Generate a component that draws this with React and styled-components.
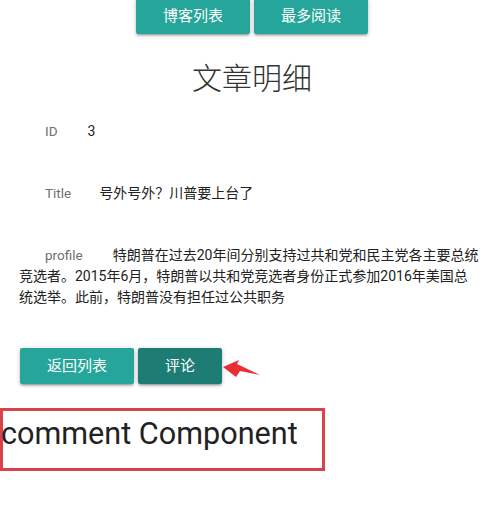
import React from "react";
import styled, { createGlobalStyle } from "styled-components";

const GlobalStyle = createGlobalStyle`
  html, body { margin: 0; padding: 0; background: #fff; }
  body {
    font-family: Roboto, "Noto Sans CJK SC", sans-serif;
    color: #222;
    overflow: hidden;
  }
  * { box-sizing: border-box; }
`;

const Page = styled.div`
  width: 503px;
  height: 508px;
  position: relative;
  overflow: hidden;
`;

const NavBar = styled.nav`
  display: flex;
  justify-content: center;
  gap: 4px;
  margin-top: -2px;
  padding-left: 1px;
`;

const Button = styled.button`
  height: 36px;
  padding: 0 27px;
  border: none;
  border-radius: 2px;
  background: ${(p) => (p.$active ? "#1d7d74" : "#26a69a")};
  color: #fff;
  font-family: Roboto, "Noto Sans CJK SC", sans-serif;
  font-size: 15px;
  line-height: 36px;
  cursor: pointer;
  box-shadow: 0 2px 2px 0 rgba(0, 0, 0, 0.14), 0 3px 1px -2px rgba(0, 0, 0, 0.12),
    0 1px 5px 0 rgba(0, 0, 0, 0.2);
`;

const Heading = styled.h1`
  margin: 22px 0 0;
  text-align: center;
  font-family: "Noto Sans CJK SC", sans-serif;
  font-weight: 300;
  font-size: 30px;
  line-height: 40px;
  color: #333;
  padding-left: 1px;
`;

const Detail = styled.section`
  margin-top: 25px;
  padding: 0 23px 0 19px;
`;

const Field = styled.div`
  font-size: 14px;
  line-height: 21px;
  margin-bottom: 41px;
  color: #222;
`;

const Label = styled.span`
  display: inline-block;
  margin-left: 26px;
  margin-right: ${(p) => p.$gap || 30}px;
  color: #707070;
  font-size: 13.5px;
`;

const Actions = styled.div`
  display: flex;
  gap: 4px;
  padding-left: 20px;
  margin-top: -1px;
  position: relative;
`;

const Arrow = styled.svg`
  position: absolute;
  left: 222px;
  top: 9px;
`;

const CommentBox = styled.div`
  margin-top: 24px;
  width: 325px;
  height: 63px;
  border: 3px solid #d8434b;
  padding: 5px 0 0 0;
  text-indent: -2px;
  font-family: Roboto, sans-serif;
  font-size: 30.6px;
  line-height: 35px;
  color: #222;
`;

export default function App() {
  return (
    <Page>
      <GlobalStyle />
      <NavBar>
        <Button>博客列表</Button>
        <Button>最多阅读</Button>
      </NavBar>
      <Heading>文章明细</Heading>
      <Detail>
        <Field>
          <Label>ID</Label>3
        </Field>
        <Field>
          <Label $gap={28}>Title</Label>号外号外？川普要上台了
        </Field>
        <Field>
          <Label $gap={30}>profile</Label>
          特朗普在过去20年间分别支持过共和党和民主党各主要总统竞选者。2015年6月，特朗普以共和党竞选者身份正式参加2016年美国总统选举。此前，特朗普没有担任过公共职务
        </Field>
      </Detail>
      <Actions>
        <Button>返回列表</Button>
        <Button $active>评论</Button>
        <Arrow width="40" height="22" viewBox="0 0 40 22">
          <polygon
            points="1,10 17,3 15,7 38,18 18,14 14,20"
            fill="#ea2e36"
          />
        </Arrow>
      </Actions>
      <CommentBox>comment Component</CommentBox>
    </Page>
  );
}
